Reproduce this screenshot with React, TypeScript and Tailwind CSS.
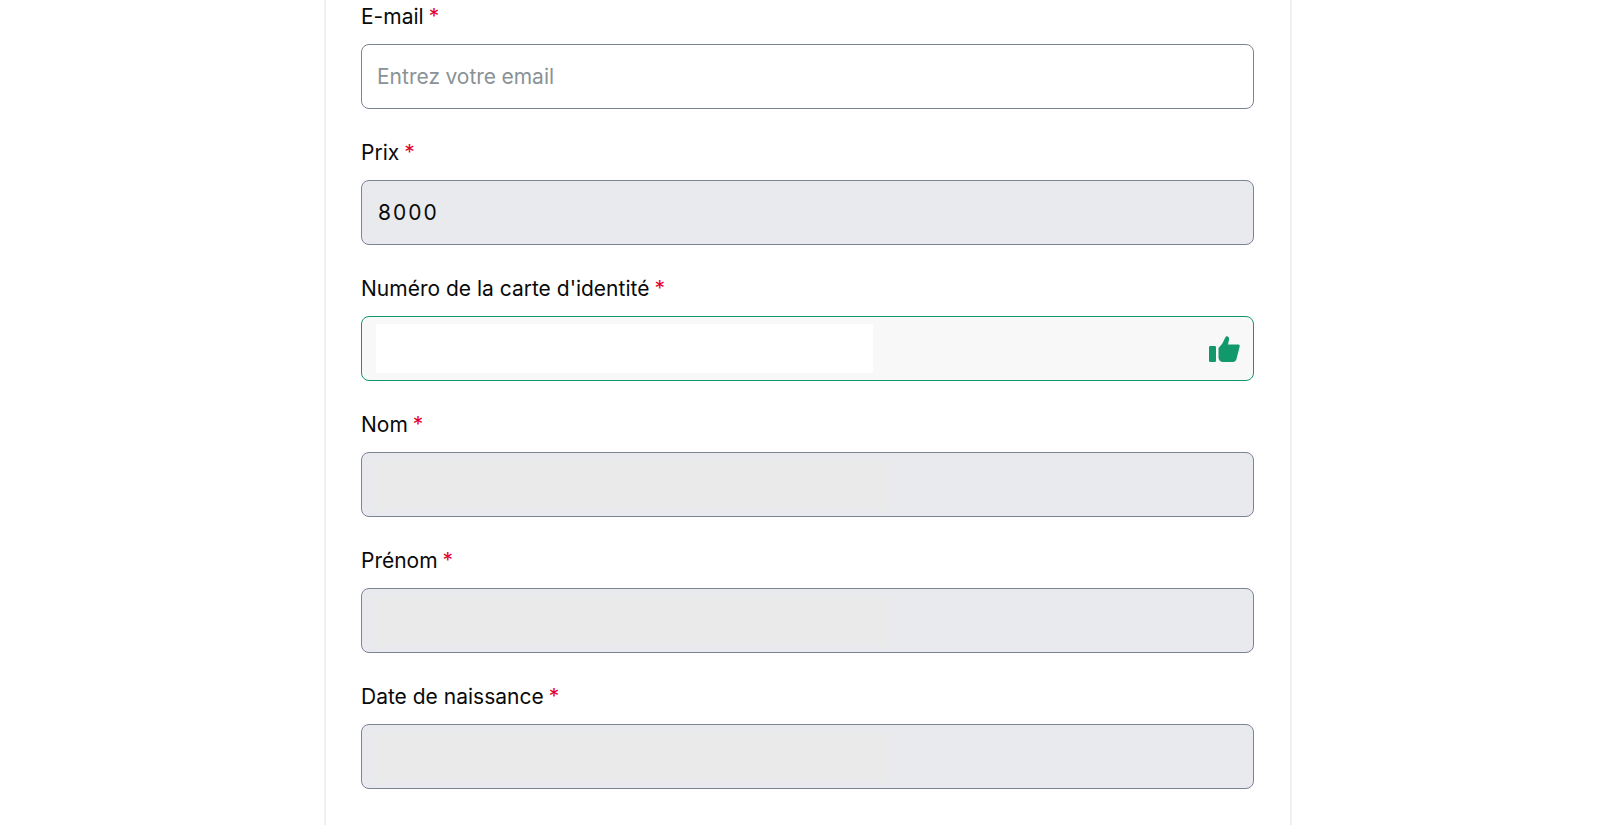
const Star = () => <span className="ml-[5px] text-[#e4002b]">*</span>;

const ThumbIcon = () => (
  <svg width="31" height="26" viewBox="0 0 31 26" className="text-[#12996b]" fill="currentColor">
    <rect x="0" y="10" width="7" height="16" rx="1.2" />
    <path d="M9.500 12 13 8c2-3 2.500-6 4-7.500 2-.8 3.500 1 3 3.500l-1 4.500h10c1.500 0 2 1 1.600 2.200L27.500 23c-.5 2-2 3-3.500 3H14c-2.500 0-4.500-2-4.500-4.500z" />
  </svg>
);

const labelClass = "h-6 text-[21px] leading-[26px] text-[#0a0a0a]";

const Field = ({ label, children }: { label: string; children: React.ReactNode }) => (
  <div className="flex flex-col gap-4">
    <label className={labelClass}>
      {label}
      <Star />
    </label>
    {children}
  </div>
);

const Blank = () => (
  <div className="flex h-[65px] items-center rounded-lg border border-[#7d8396] bg-[#e9eaee]">
    <div className="ml-3 h-[50px] w-[516px] bg-[#eaeaea]" />
  </div>
);

export default function App() {
  return (
    <div className="h-[825px] overflow-hidden bg-white font-['Inter',sans-serif]">
      <div className="ml-[324px] h-full w-[968px] border-x-2 border-[#eeeff5] pt-1 pr-9 pl-[35px]">
        <div className="flex flex-col gap-[31px]">
          <Field label="E-mail">
            <div className="flex h-[65px] items-center rounded-lg border border-[#7d8396] bg-white px-[15px] text-[21px] [word-spacing:-0.5px] text-[#8a9296]">
              Entrez votre email
            </div>
          </Field>
          <Field label="Prix">
            <div className="flex h-[65px] items-center rounded-lg border border-[#7d8396] bg-[#e9eaee] px-4 text-[21px] tracking-[2px] text-[#0a0a0a]">
              8000
            </div>
          </Field>
          <Field label="Numéro de la carte d'identité">
            <div className="flex h-[65px] items-center justify-between rounded-lg border border-[#12996b] bg-[#f8f8f8] pr-[13px] pl-[14px]">
              <div className="h-[49px] w-[497px] bg-white" />
              <ThumbIcon />
            </div>
          </Field>
          {["Nom", "Prénom", "Date de naissance"].map((name) => (
            <Field key={name} label={name}>
              <Blank />
            </Field>
          ))}
        </div>
      </div>
    </div>
  );
}
